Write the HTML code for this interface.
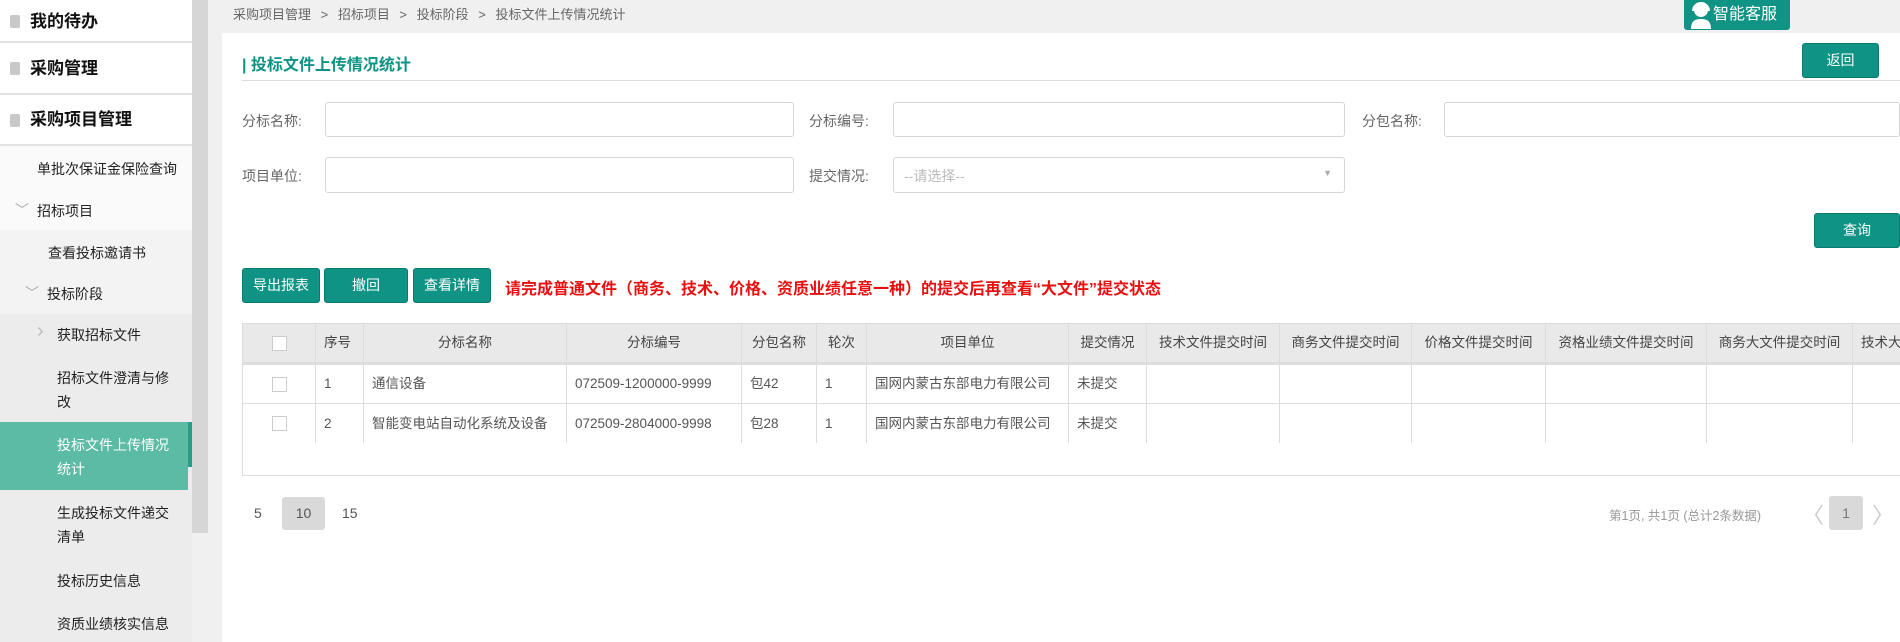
<!DOCTYPE html>
<html><head><meta charset="utf-8"><style>
*{box-sizing:border-box;margin:0;padding:0}
body{width:1900px;height:642px;overflow:hidden;background:#f0f0f0;font-family:"Liberation Sans","Noto Sans CJK SC",sans-serif;position:relative;color:#333}
.a{position:absolute}
.side{left:0;top:0;width:192px;height:642px;background:#fff}
.top{left:0;width:192px;height:51px;background:#fff;border-bottom:2px solid #e2e2e2;font-size:17px;font-weight:bold;color:#111;padding-left:30px}
.top i{position:absolute;left:10px;width:10px;height:13px;background:#c8c8c8;border-radius:2px}
.si{font-size:14px;color:#222;white-space:nowrap}
.btn{background:#0f9384;color:#fff;font-size:14px;text-align:center;border-radius:3px;border:1px solid #0b7a6e}
.lbl{font-size:14px;color:#666}
.inp{background:#fff;border:1px solid #d6d6d6;border-radius:3px}
table{border-collapse:collapse;font-size:13.5px;table-layout:fixed}
td,th{border:1px solid #dcdcdc;height:40px;line-height:20px;font-weight:normal;white-space:nowrap;overflow:hidden;padding:0 8px;vertical-align:middle}
th{background:#e9e9e9;color:#444;text-align:center;border-bottom:3px solid #ddd}
td{color:#555}
.cb{display:inline-block;width:15px;height:15px;border:1px solid #ccc;background:#fff;vertical-align:middle}
</style></head><body>
<div class="a side"></div>
<div class="a top" style="top:0;line-height:43px;height:43px"><i style="top:15px"></i>我的待办</div>
<div class="a top" style="top:43px;line-height:51px;height:52px"><i style="top:19px"></i>采购管理</div>
<div class="a top" style="top:95px;line-height:50px;height:51px"><i style="top:19px"></i>采购项目管理</div>
<div class="a" style="left:0;top:146px;width:192px;height:84px;background:#fafafa"></div>
<div class="a" style="left:0;top:230px;width:192px;height:84px;background:#f3f3f3"></div>
<div class="a" style="left:0;top:314px;width:192px;height:328px;background:#ececec"></div>
<div class="a" style="left:0;top:422px;width:188px;height:68px;background:#5bbba5"></div>
<div class="a" style="left:188px;top:422px;width:4px;height:45px;background:#2a9d88"></div>
<div class="a si" style="left:37px;top:159px">单批次保证金保险查询</div>
<div class="a si" style="left:15px;top:200px;color:#aaa">﹀</div>
<div class="a si" style="left:37px;top:201px">招标项目</div>
<div class="a si" style="left:48px;top:243px">查看投标邀请书</div>
<div class="a si" style="left:25px;top:283px;color:#aaa">﹀</div>
<div class="a si" style="left:47px;top:284px">投标阶段</div>
<div class="a si" style="left:37px;top:320px;color:#bbb;font-size:20px">›</div>
<div class="a si" style="left:57px;top:325px">获取招标文件</div>
<div class="a si" style="left:57px;top:366px;line-height:24px">招标文件澄清与修<br>改</div>
<div class="a si" style="left:57px;top:433px;line-height:24px;color:#fff">投标文件上传情况<br>统计</div>
<div class="a si" style="left:57px;top:501px;line-height:24px">生成投标文件递交<br>清单</div>
<div class="a si" style="left:57px;top:571px">投标历史信息</div>
<div class="a si" style="left:57px;top:614px">资质业绩核实信息</div>
<div class="a" style="left:192px;top:0;width:16px;height:533px;background:#d6d6d6"></div>
<div class="a" style="left:233px;top:4px;font-size:13px;color:#666;word-spacing:6px">采购项目管理 &gt; 招标项目 &gt; 投标阶段 &gt; 投标文件上传情况统计</div>
<div class="a" style="left:1684px;top:0;width:106px;height:30px;background:#0f9384;border-radius:0 0 3px 3px;color:#fff;font-size:16px;line-height:30px;padding-left:29px">
<svg class="a" style="left:6px;top:1px" width="22" height="28" viewBox="0 0 22 28"><circle cx="11" cy="9" r="7" fill="#fff"/><path d="M3 10a8 8 0 0 1 16 0" stroke="#fff" stroke-width="2" fill="none"/><path d="M1 28c0-8 4-10 10-10s10 2 10 10z" fill="#fff"/></svg>智能客服</div>
<div class="a" style="left:222px;top:33px;width:1678px;height:609px;background:#fff"></div>
<div class="a" style="left:242px;top:51px;font-size:16px;font-weight:bold;color:#0f9384">| 投标文件上传情况统计</div>
<div class="a" style="left:242px;top:80px;width:1658px;height:1px;background:#ddd"></div>
<div class="a btn" style="left:1802px;top:43px;width:77px;height:35px;line-height:33px">返回</div>
<div class="a lbl" style="left:242px;top:111px">分标名称:</div>
<div class="a inp" style="left:325px;top:102px;width:469px;height:35px"></div>
<div class="a lbl" style="left:809px;top:111px">分标编号:</div>
<div class="a inp" style="left:893px;top:102px;width:452px;height:35px"></div>
<div class="a lbl" style="left:1362px;top:111px">分包名称:</div>
<div class="a inp" style="left:1444px;top:102px;width:456px;height:35px"></div>
<div class="a lbl" style="left:242px;top:166px">项目单位:</div>
<div class="a inp" style="left:325px;top:157px;width:469px;height:36px"></div>
<div class="a lbl" style="left:809px;top:166px">提交情况:</div>
<div class="a inp" style="left:893px;top:157px;width:452px;height:36px;font-size:14px;color:#bbb;padding:8px 10px">--请选择--<span style="position:absolute;right:12px;top:10px;font-size:9px;color:#aaa">▼</span></div>
<div class="a btn" style="left:1814px;top:213px;width:86px;height:35px;line-height:33px">查询</div>
<div class="a btn" style="left:242px;top:268px;width:78px;height:35px;line-height:33px">导出报表</div>
<div class="a btn" style="left:324px;top:268px;width:84px;height:35px;line-height:33px">撤回</div>
<div class="a btn" style="left:413px;top:268px;width:78px;height:35px;line-height:33px">查看详情</div>
<div class="a" style="left:505px;top:275px;font-size:16px;font-weight:bold;color:#e8100f">请完成普通文件（商务、技术、价格、资质业绩任意一种）的提交后再查看“大文件”提交状态</div>
<div class="a" style="left:242px;top:323px;width:1658px;height:153px;border:1px solid #dcdcdc;border-right:none;overflow:hidden">
<table style="width:1700px;margin:-1px 0 0 -1px">
<colgroup><col style="width:73px"><col style="width:48px"><col style="width:203px"><col style="width:175px"><col style="width:75px"><col style="width:50px"><col style="width:202px"><col style="width:78px"><col style="width:133px"><col style="width:132px"><col style="width:134px"><col style="width:161px"><col style="width:146px"><col style="width:90px"></colgroup>
<tr><th><span class="cb"></span></th><th style="text-align:left">序号</th><th>分标名称</th><th>分标编号</th><th>分包名称</th><th>轮次</th><th>项目单位</th><th>提交情况</th><th>技术文件提交时间</th><th>商务文件提交时间</th><th>价格文件提交时间</th><th>资格业绩文件提交时间</th><th>商务大文件提交时间</th><th style="text-align:left">技术大文件提交时间</th></tr>
<tr><td style="text-align:center;border-left-color:#fff"><span class="cb"></span></td><td>1</td><td>通信设备</td><td>072509-1200000-9999</td><td>包42</td><td>1</td><td>国网内蒙古东部电力有限公司</td><td>未提交</td><td></td><td></td><td></td><td></td><td></td><td></td></tr>
<tr><td style="text-align:center;border-left-color:#fff;border-bottom-color:#fff"><span class="cb"></span></td><td style="border-bottom-color:#fff">2</td><td style="border-bottom-color:#fff">智能变电站自动化系统及设备</td><td style="border-bottom-color:#fff">072509-2804000-9998</td><td style="border-bottom-color:#fff">包28</td><td style="border-bottom-color:#fff">1</td><td style="border-bottom-color:#fff">国网内蒙古东部电力有限公司</td><td style="border-bottom-color:#fff">未提交</td><td style="border-bottom-color:#fff"></td><td style="border-bottom-color:#fff"></td><td style="border-bottom-color:#fff"></td><td style="border-bottom-color:#fff"></td><td style="border-bottom-color:#fff"></td><td style="border-bottom-color:#fff"></td></tr>
</table></div>
<div class="a" style="left:254px;top:505px;font-size:14px;color:#555">5</div>
<div class="a" style="left:282px;top:497px;width:43px;height:33px;background:#d9d9d9;border-radius:3px;font-size:14px;color:#555;text-align:center;line-height:33px">10</div>
<div class="a" style="left:342px;top:505px;font-size:14px;color:#555">15</div>
<div class="a" style="left:1609px;top:505px;font-size:12.5px;color:#999">第1页, 共1页 (总计2条数据)</div>
<div class="a" style="left:1802px;top:498px;font-size:22px;color:#ccc">〈</div>
<div class="a" style="left:1829px;top:496px;width:34px;height:34px;background:#d9d9d9;border-radius:3px;font-size:14px;color:#777;text-align:center;line-height:34px">1</div>
<div class="a" style="left:1872px;top:498px;font-size:22px;color:#ccc">〉</div>
</body></html>
